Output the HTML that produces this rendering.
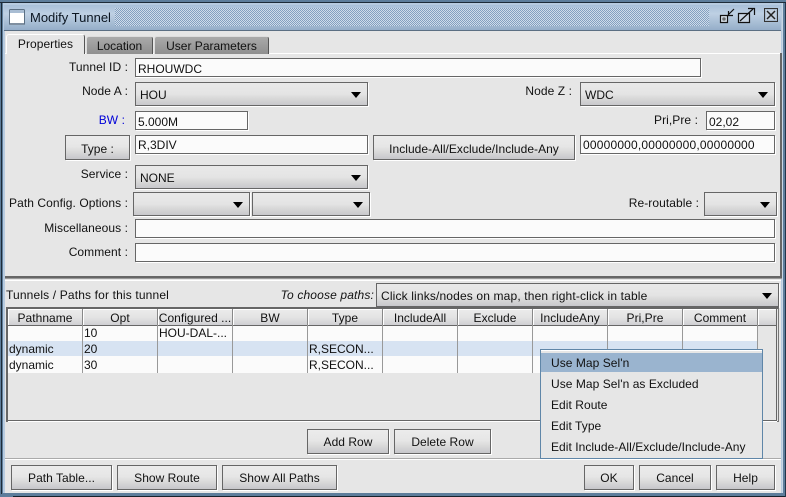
<!DOCTYPE html>
<html><head><meta charset="utf-8"><style>
html,body{margin:0;padding:0;width:786px;height:497px;overflow:hidden;background:#5d7d9b}
*{box-sizing:border-box}
body{position:relative;font:12px/14px "Liberation Sans",sans-serif;color:#111}
div{position:absolute;white-space:nowrap}
.l{text-align:right;letter-spacing:.07px}
.f{background:#fbfbfb;border:1px solid #666;box-shadow:1px 1px 0 #fff;padding-left:2px;line-height:21px}
.b{background:linear-gradient(#ececec 0,#e6e6e6 45%,#d9d9d9 70%,#c6c6ca 100%);border:1px solid #666;box-shadow:1px 1px 0 #fff;text-align:center;line-height:25px;letter-spacing:.03px}
.c{background:linear-gradient(#e9e9e9 0,#e4e4e4 50%,#d8d8d8 70%,#c8c8cc 100%);border:1px solid #666;box-shadow:1px 1px 0 #fff;padding-left:4px;line-height:25px}
.c::after{content:"";position:absolute;right:6px;top:9px;border:5px solid transparent;border-top:6px solid #000;border-bottom:0;width:0;height:0}
.h{background:linear-gradient(#ececec,#e4e4e4 50%,#cfcfd3);border-right:1px solid #888;box-shadow:inset 1px 1px 0 #fff;text-align:center;line-height:18px;top:309px;height:16px;width:75px;overflow:hidden;letter-spacing:.03px}
.v{width:1px;background:#999;top:325px;height:48px}
.t{font-size:12px;line-height:16px}
.m{left:551px;line-height:18px;letter-spacing:.05px}
</style></head><body>
<div style="left:0;top:0;width:786px;height:3px;background:#5d7d9b;border-bottom:1px solid #1d2b38"></div>
<div style="left:3px;top:3px;width:779px;height:490px;background:#b7cbe0"></div>
<div style="left:4px;top:5px;width:777px;height:26px;background:linear-gradient(#a9c0d9,#bed0e3 35%,#95aec9);border-bottom:1px solid #5b6f83"></div>
<div style="left:115px;top:8px;width:594px;height:18px;background:repeating-conic-gradient(#83a0c0 0 25%,#d0dcea 0 50%) 0 0/2px 2px"></div>
<svg style="position:absolute;left:9px;top:9px" width="16" height="17"><rect x=".5" y=".5" width="15" height="15" rx="1" fill="#fff" stroke="#5b6f83"/><rect x="1" y="1" width="14" height="3" fill="#a9bdd3"/><rect x="1" y="14" width="14" height="2" fill="#7f8fa0"/></svg>
<div style="left:30px;top:9px;font-size:13px;line-height:17px;color:#0b1622">Modify Tunnel</div>
<svg style="position:absolute;left:718px;top:6px" width="64" height="20" fill="none"><path d="M2.500 9.500h7v7h-7z" stroke="#111" stroke-width="1.200" fill="#dfe8f1"/><path d="M5 12h2v2H5z" fill="#fff" stroke="#111" stroke-width=".8"/><path d="M16 3l-6 6M10.500 5v4.500H15" stroke="#111" stroke-width="1.200"/><path d="M20.500 7.500h11v9h-11z" stroke="#111" stroke-width="1.200" fill="#c9d6e4"/><path d="M22 15l13-12M30 2.500h6.500V9" stroke="#111" stroke-width="1.200"/><rect x="46.500" y="2.500" width="13" height="13" fill="#a9bcd0" stroke="#333"/><rect x="48" y="4" width="10" height="10" fill="#c3d0de"/><path d="M49 5l8 8M57 5l-8 8" stroke="#222" stroke-width="1.500"/></svg>

<div style="left:5px;top:31px;width:776px;height:462px;background:#e6e6e6"></div>
<div style="left:780px;top:53px;width:2px;height:225px;background:#666"></div>
<div style="left:5px;top:53px;width:775px;height:1px;background:#fff"></div>
<div style="left:6px;top:34px;width:79px;height:20px;background:#e6e6e6;border-top:1px solid #fff;border-left:1px solid #fff;border-right:1px solid #555;text-align:center;line-height:19px;border-radius:3px 3px 0 0;letter-spacing:.05px">Properties</div>
<div style="left:86px;top:36px;width:67px;height:18px;background:linear-gradient(#aaa,#8f8f8f);border-top:1px solid #ddd;border-left:1px solid #ddd;border-right:1px solid #555;text-align:center;line-height:19px;border-radius:3px 3px 0 0">Location</div>
<div style="left:154px;top:36px;width:115px;height:18px;background:linear-gradient(#aaa,#8f8f8f);border-top:1px solid #ddd;border-left:1px solid #ddd;border-right:1px solid #555;text-align:center;line-height:19px;border-radius:3px 3px 0 0">User Parameters</div>

<div class="l" style="right:658px;top:60px">Tunnel ID :</div>
<div class="f" style="left:135px;top:58px;width:566px;height:19px">RHOUWDC</div>
<div class="l" style="right:658px;top:84px">Node A :</div>
<div class="c" style="left:135px;top:82px;width:233px;height:24px">HOU</div>
<div class="l" style="right:214px;top:84px">Node Z :</div>
<div class="c" style="left:580px;top:82px;width:195px;height:24px">WDC</div>
<div class="l" style="right:661px;top:113px;color:#0000d8">BW :</div>
<div class="f" style="left:135px;top:111px;width:113px;height:19px">5.000M</div>
<div class="l" style="right:88px;top:113px">Pri,Pre :</div>
<div class="f" style="left:706px;top:111px;width:69px;height:19px">02,02</div>
<div class="b" style="left:65px;top:135px;width:65px;height:25px;line-height:27px">Type :</div>
<div class="f" style="left:135px;top:135px;width:233px;height:19px;line-height:19px">R,3DIV</div>
<div class="b" style="left:373px;top:135px;width:202px;height:25px;line-height:27px">Include-All/Exclude/Include-Any</div>
<div class="f" style="left:580px;top:135px;width:195px;height:19px;line-height:19px;letter-spacing:.19px">00000000,00000000,00000000</div>
<div class="l" style="right:658px;top:167px">Service :</div>
<div class="c" style="left:135px;top:165px;width:233px;height:24px">NONE</div>
<div class="l" style="right:658px;top:196px">Path Config. Options :</div>
<div class="c" style="left:133px;top:192px;width:117px;height:24px"></div>
<div class="c" style="left:252px;top:192px;width:118px;height:24px"></div>
<div class="l" style="right:87px;top:196px">Re-routable :</div>
<div class="c" style="left:704px;top:192px;width:73px;height:24px"></div>
<div class="l" style="right:658px;top:221px">Miscellaneous :</div>
<div class="f" style="left:135px;top:219px;width:640px;height:19px"></div>
<div class="l" style="right:658px;top:245px">Comment :</div>
<div class="f" style="left:135px;top:243px;width:640px;height:19px"></div>

<div style="left:5px;top:276px;width:777px;height:3px;background:#666;border-bottom:1px solid #999"></div>
<div style="left:5px;top:280px;width:776px;height:1px;background:#fff"></div>
<div style="left:6px;top:288px;letter-spacing:.15px">Tunnels / Paths for this tunnel</div>
<div class="l" style="right:412px;top:288px;font-style:italic;letter-spacing:.15px">To choose paths:</div>
<div class="c" style="left:376px;top:283px;width:403px;height:24px;letter-spacing:.15px">Click links/nodes on map, then right-click in table</div>

<div style="left:6px;top:307px;width:773px;height:115px;border-left:2px solid #666;border-top:2px solid #666;border-right:1px solid #777;border-bottom:1px solid #777;background:#e6e6e6"></div>
<div style="left:8px;top:421px;width:769px;height:1px;background:#fff"></div>
<div style="left:8px;top:420px;width:769px;height:1px;background:#666"></div>
<div style="left:776px;top:309px;width:1px;height:112px;background:#666"></div>
<div style="left:8px;top:325px;width:750px;height:48px;background:#fbfbfb"></div>
<div style="left:8px;top:341px;width:750px;height:15px;background:#d7e3f2"></div>
<div style="left:8px;top:325px;width:768px;height:1px;background:#666"></div>
<div class="h" style="left:8px">Pathname</div><div class="h" style="left:83px">Opt</div><div class="h" style="left:158px">Configured ...</div><div class="h" style="left:233px">BW</div><div class="h" style="left:308px">Type</div><div class="h" style="left:383px">IncludeAll</div><div class="h" style="left:458px">Exclude</div><div class="h" style="left:533px">IncludeAny</div><div class="h" style="left:608px">Pri,Pre</div><div class="h" style="left:683px">Comment</div>
<div class="h" style="left:758px;width:18px;border-right:0"></div>
<div class="v" style="left:82px"></div><div class="v" style="left:157px"></div><div class="v" style="left:232px"></div><div class="v" style="left:307px"></div><div class="v" style="left:382px"></div><div class="v" style="left:457px"></div><div class="v" style="left:532px"></div><div class="v" style="left:607px"></div><div class="v" style="left:682px"></div><div class="v" style="left:757px"></div>
<div class="t" style="left:84px;top:325px">10</div><div class="t" style="left:159px;top:325px">HOU-DAL-...</div>
<div class="t" style="left:9px;top:341px">dynamic</div><div class="t" style="left:84px;top:341px">20</div><div class="t" style="left:309px;top:341px">R,SECON...</div>
<div class="t" style="left:9px;top:357px">dynamic</div><div class="t" style="left:84px;top:357px">30</div><div class="t" style="left:309px;top:357px">R,SECON...</div>

<div class="b" style="left:307px;top:429px;width:82px;height:25px">Add Row</div>
<div class="b" style="left:394px;top:429px;width:97px;height:25px">Delete Row</div>
<div style="left:5px;top:458px;width:776px;height:1px;background:#aaa"></div>
<div style="left:5px;top:459px;width:776px;height:1px;background:#fff"></div>
<div class="b" style="left:11px;top:465px;width:101px;height:25px">Path Table...</div>
<div class="b" style="left:117px;top:465px;width:100px;height:25px">Show Route</div>
<div class="b" style="left:222px;top:465px;width:115px;height:25px">Show All Paths</div>
<div class="b" style="left:584px;top:465px;width:50px;height:25px">OK</div>
<div class="b" style="left:639px;top:465px;width:72px;height:25px">Cancel</div>
<div class="b" style="left:716px;top:465px;width:59px;height:25px">Help</div>

<div style="left:540px;top:349px;width:223px;height:110px;background:#e6e6e6;border:1px solid #5f86a8;box-shadow:inset 0 1px 0 #fff"></div>
<div style="left:541px;top:353px;width:221px;height:19px;background:#9ab4cf"></div>
<div class="m" style="top:354px">Use Map Sel'n</div>
<div class="m" style="top:375px">Use Map Sel'n as Excluded</div>
<div class="m" style="top:396px">Edit Route</div>
<div class="m" style="top:417px">Edit Type</div>
<div class="m" style="top:438px">Edit Include-All/Exclude/Include-Any</div>
<div style="left:13px;top:496px;width:773px;height:1px;background:#17222c"></div>
<div style="left:782px;top:3px;width:1px;height:490px;background:#c9d6e4"></div>
<div style="left:785px;top:3px;width:1px;height:494px;background:#22364a"></div>
<div style="left:1px;top:3px;width:1px;height:491px;background:#1d2b38"></div>
</body></html>
